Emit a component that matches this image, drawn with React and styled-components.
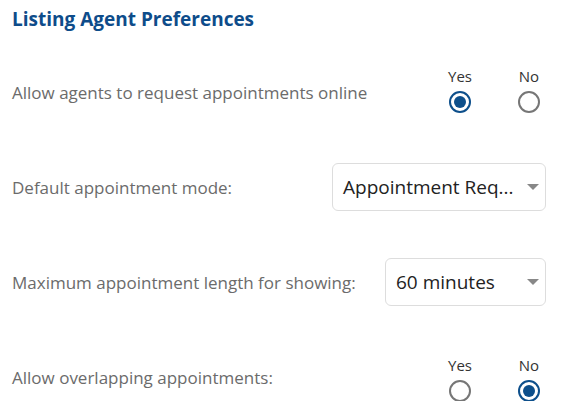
import React from "react";
import styled, { createGlobalStyle } from "styled-components";

const GlobalStyle = createGlobalStyle`
  body {
    margin: 0;
    background: #ffffff;
    font-family: "Open Sans", "Liberation Sans", sans-serif;
  }
`;

const Page = styled.div`
  padding: 7px 17px 0 12px;
`;

const Title = styled.h2`
  margin: 0 0 37px;
  font-size: 19px;
  line-height: 24px;
  font-weight: 700;
  color: #0e4c8a;
`;

const Rows = styled.div`
  display: flex;
  flex-direction: column;
  gap: 47px;
`;

const Row = styled.div`
  display: flex;
  align-items: center;
  justify-content: space-between;
  height: 48px;
`;

const Label = styled.span`
  font-size: 17px;
  color: #6b6b6b;
`;

const RadioGroup = styled.div`
  display: flex;
  gap: 35px;
  padding-top: ${(p) => (p.low ? "2px" : "0")};
  padding-bottom: ${(p) => (p.low ? "0" : "5px")};
`;

const Option = styled.label`
  display: flex;
  flex-direction: column;
  align-items: center;
  width: 34px;
  font-size: 15px;
  line-height: 20px;
  color: #333333;
`;

const Circle = styled.span`
  box-sizing: border-box;
  display: flex;
  align-items: center;
  justify-content: center;
  width: 22px;
  height: 22px;
  margin-top: 5px;
  border-radius: 50%;
  border: 2px solid ${(p) => (p.checked ? "#0d4f8b" : "#767676")};

  &::after {
    content: "";
    display: ${(p) => (p.checked ? "block" : "none")};
    width: 12px;
    height: 12px;
    border-radius: 50%;
    background: #0d4f8b;
  }
`;

const Select = styled.div`
  box-sizing: border-box;
  display: flex;
  align-items: center;
  width: ${(p) => p.width}px;
  height: 48px;
  padding: 0 6px 0 10px;
  border: 1px solid #dddddd;
  border-radius: 6px;
  background: #ffffff;
`;

const SelectText = styled.span`
  flex: 1;
  white-space: nowrap;
  font-size: 19px;
  color: #222222;
`;

const Caret = styled.span`
  width: 0;
  height: 0;
  border-left: 6px solid transparent;
  border-right: 6px solid transparent;
  border-top: 6px solid #888888;
`;

const YesNo = ({ value, low }) => (
  <RadioGroup low={low}>
    <Option>
      Yes
      <Circle checked={value === true} />
    </Option>
    <Option>
      No
      <Circle checked={value === false} />
    </Option>
  </RadioGroup>
);

const Dropdown = ({ width, value }) => (
  <Select width={width}>
    <SelectText>{value}</SelectText>
    <Caret />
  </Select>
);

export default function App() {
  return (
    <Page>
      <GlobalStyle />
      <Title>Listing Agent Preferences</Title>
      <Rows>
        <Row>
          <Label>Allow agents to request appointments online</Label>
          <YesNo value={true} />
        </Row>
        <Row>
          <Label>Default appointment mode:</Label>
          <Dropdown width={214} value="Appointment Req..." />
        </Row>
        <Row>
          <Label>Maximum appointment length for showing:</Label>
          <Dropdown width={161} value="60 minutes" />
        </Row>
        <Row>
          <Label>Allow overlapping appointments:</Label>
          <YesNo value={false} low />
        </Row>
      </Rows>
    </Page>
  );
}
